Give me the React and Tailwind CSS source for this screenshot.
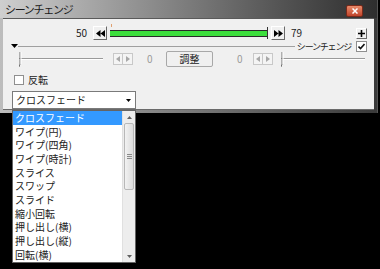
import React from 'react';

const font = { fontFamily: '"MS UI Gothic", "Noto Sans CJK JP", sans-serif' };

const items = [
  'クロスフェード',
  'ワイプ(円)',
  'ワイプ(四角)',
  'ワイプ(時計)',
  'スライス',
  'スワップ',
  'スライド',
  '縮小回転',
  '押し出し(横)',
  '押し出し(縦)',
  '回転(横)',
];

// small raised button with a glyph
function RaisedButton({ w, h, children }) {
  return (
    <div
      className={`flex items-center justify-center bg-[#f0f0f0] border border-t-white border-l-white border-r-[#696969] border-b-[#696969] ${w} ${h}`}
    >
      {children}
    </div>
  );
}

function SpinPair() {
  return (
    <div className="flex h-[12px]">
      <div className="w-[10px] h-[12px] border border-[#c8c8c8] bg-[#f4f4f4] flex items-center justify-center">
        <svg width="4" height="6" viewBox="0 0 4 6"><path d="M4 0 L0 3 L4 6 Z" fill="#a8a8a8" /></svg>
      </div>
      <div className="w-[10px] h-[12px] border border-l-0 border-[#c8c8c8] bg-[#f4f4f4] flex items-center justify-center">
        <svg width="4" height="6" viewBox="0 0 4 6"><path d="M0 0 L4 3 L0 6 Z" fill="#a8a8a8" /></svg>
      </div>
    </div>
  );
}

function Slider({ w, thumbLeft }) {
  return (
    <div className={`relative h-[16px] ${w}`}>
      <div className="absolute left-0 right-0 top-[7px] h-[1px] bg-[#9a9a9a]" />
      <div className="absolute left-0 right-0 top-[8px] h-[1px] bg-white" />
      <div className="absolute top-[1px]" style={{ left: thumbLeft }}>
        <svg width="5" height="15" viewBox="0 0 5 15">
          <path d="M1 0 L1 12 L0 15" stroke="#6f6f6f" strokeWidth="1" fill="none" />
          <path d="M2 0 L2 12" stroke="#ffffff" strokeWidth="1" fill="none" />
        </svg>
      </div>
    </div>
  );
}

function Check({ checked }) {
  return (
    <div className="w-[11px] h-[11px] border border-[#8f8f8f] bg-white flex items-center justify-center">
      {checked && (
        <svg width="7" height="7" viewBox="0 0 7 7">
          <path d="M0.5 3.5 L2.5 5.5 L6.5 1" stroke="#111" strokeWidth="1.6" fill="none" />
        </svg>
      )}
    </div>
  );
}

export default function App() {
  return (
    <div className="relative w-[380px] h-[269px] bg-black overflow-hidden text-[#222]" style={font}>
      {/* window */}
      <div className="w-[378px] h-[113px] flex flex-col bg-gradient-to-r from-[#bdbdbd] via-[#7a7a7a] to-[#3a3a3a] border-r border-[#555]">
        {/* title bar */}
        <div className="h-[18px] flex items-center pl-[5px] pr-[14px] bg-gradient-to-r from-[#cfcfcf] via-[#8c8c8c] via-40% to-[#2e2e2e]">
          <span className="text-[11px] leading-none text-[#1a1a1a] tracking-[-1.3px]">シーンチェンジ</span>
          <div className="flex-1" />
          <div className="mt-[3px] w-[17px] h-[12px] rounded-[2px] bg-gradient-to-b from-[#e88a6a] to-[#c0432a] border border-[#7a2a1a] flex items-center justify-center">
            <svg width="6" height="6" viewBox="0 0 6 6">
              <path d="M0.5 0.5 L5.5 5.5 M5.5 0.5 L0.5 5.5" stroke="#fff" strokeWidth="1.5" />
            </svg>
          </div>
        </div>

        {/* client area */}
        <div className="flex-1 ml-[3px] mr-[3px] mb-[3px] bg-[#f0f0f0] border-t border-[#5a5a5a] border-b border-b-[#6a6a6a] flex flex-col text-[10px]">
          {/* row 1 */}
          <div className="mt-[6px] h-[16px] flex items-center">
            <div className="w-[84px] text-right leading-none">50</div>
            <div className="ml-[6px]">
              <RaisedButton w="w-[14px]" h="h-[14px]">
                <svg width="9" height="7" viewBox="0 0 9 7"><path d="M4.5 0 L0 3.5 L4.5 7 Z M9 0 L4.5 3.5 L9 7 Z" fill="#000" /></svg>
              </RaisedButton>
            </div>
            <div className="relative ml-[3px] w-[158px] h-[14px] flex items-center">
              <div className="absolute left-[1px] top-[-2px] w-[1px] h-[3px] bg-[#e0a070]" />
              <div className="w-full h-[7px] bg-[#3ddf3d] border-t border-b border-[#2a2a2a]" />
              <div className="absolute right-0 top-[1px] w-[1px] h-[12px] bg-[#333]" />
            </div>
            <div className="ml-[3px]">
              <RaisedButton w="w-[14px]" h="h-[14px]">
                <svg width="9" height="7" viewBox="0 0 9 7"><path d="M0 0 L4.5 3.5 L0 7 Z M4.5 0 L9 3.5 L4.5 7 Z" fill="#000" /></svg>
              </RaisedButton>
            </div>
            <div className="ml-[6px] leading-none">79</div>
            <div className="flex-1" />
            <div className="mr-[7px]">
              <RaisedButton w="w-[11px]" h="h-[11px]">
                <svg width="7" height="7" viewBox="0 0 7 7"><path d="M3.5 0 L3.5 7 M0 3.5 L7 3.5" stroke="#000" strokeWidth="1.6" /></svg>
              </RaisedButton>
            </div>
          </div>

          {/* row 2 */}
          <div className="h-[10px] flex items-center">
            <svg className="ml-[8px]" width="7" height="4" viewBox="0 0 7 4"><path d="M0 0 L7 0 L3.5 4 Z" fill="#000" /></svg>
            <div className="flex-1 h-[1px] bg-[#a0a0a0] ml-[0px]" />
            <span className="ml-[2px] text-[9px] leading-none tracking-[-1.2px]">シーンチェンジ</span>
            <div className="ml-[5px] mr-[7px]">
              <Check checked />
            </div>
          </div>

          {/* row 3 */}
          <div className="h-[16px] flex items-center">
            <div className="ml-[16px]">
              <Slider w="w-[84px]" thumbLeft={0} />
            </div>
            <div className="ml-[10px]">
              <SpinPair />
            </div>
            <div className="ml-[14px] w-[6px] leading-none text-[#9a9a9a]">0</div>
            <div className="ml-[13px] w-[47px] h-[16px] bg-[#f0f0f0] border border-[#a8a8a8] rounded-[2px] flex items-center justify-center leading-none">
              調整
            </div>
            <div className="ml-[24px] w-[6px] leading-none text-[#9a9a9a]">0</div>
            <div className="ml-[10px]">
              <SpinPair />
            </div>
            <div className="ml-[8px]">
              <Slider w="w-[84px]" thumbLeft={0} />
            </div>
          </div>

          {/* row 4 */}
          <div className="mt-[8px] h-[10px] flex items-center">
            <div className="ml-[11px]">
              <div className="w-[10px] h-[10px] border border-[#8f8f8f] bg-white" />
            </div>
            <span className="ml-[4px] leading-none">反転</span>
          </div>

          {/* row 5: combo */}
          <div className="mt-[6px] ml-[9px] w-[124px] h-[18px] bg-white border border-[#7a7a7a] flex items-center">
            <span className="ml-[3px] flex-1 leading-none">クロスフェード</span>
            <div className="w-[13px] h-[16px] flex items-center justify-center">
              <svg width="5" height="3" viewBox="0 0 5 3"><path d="M0 0 L5 0 L2.5 3 Z" fill="#000" /></svg>
            </div>
          </div>
        </div>
      </div>

      {/* dropdown list */}
      <div className="absolute left-[12px] top-[110px] w-[124px] h-[153px] bg-white border border-[#646464] flex text-[10px]">
        <div className="flex-1 flex flex-col">
          {items.map((t, i) => (
            <div
              key={t}
              className={`h-[13.7px] flex items-center pl-[2px] leading-none ${i === 0 ? 'bg-[#3399ff] text-white' : 'text-[#222]'}`}
            >
              {t}
            </div>
          ))}
        </div>
        {/* scrollbar */}
        <div className="w-[13px] flex flex-col bg-[#ededed] border-l border-[#e0e0e0]">
          <div className="h-[12px] flex items-center justify-center">
            <svg width="5" height="3" viewBox="0 0 5 3"><path d="M0 3 L5 3 L2.5 0 Z" fill="#606060" /></svg>
          </div>
          <div className="h-[67px] mx-[1px] bg-gradient-to-r from-[#f2f2f2] to-[#dcdcdc] border border-[#b8b8b8] rounded-[2px] flex items-center justify-center">
            <svg width="5" height="5" viewBox="0 0 5 5"><path d="M0 0.5 H5 M0 2.5 H5 M0 4.5 H5" stroke="#8a8a8a" strokeWidth="1" /></svg>
          </div>
          <div className="flex-1" />
          <div className="h-[12px] flex items-center justify-center">
            <svg width="5" height="3" viewBox="0 0 5 3"><path d="M0 0 L5 0 L2.5 3 Z" fill="#606060" /></svg>
          </div>
        </div>
      </div>
    </div>
  );
}
